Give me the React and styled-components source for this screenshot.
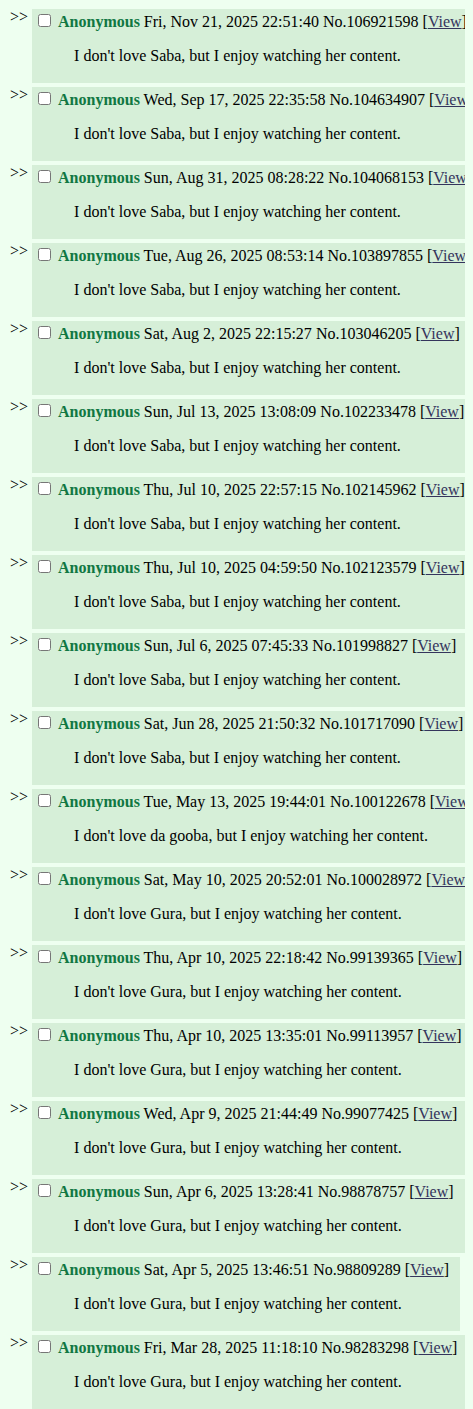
import React from 'react';
import styled, { createGlobalStyle } from 'styled-components';

const GlobalStyle = createGlobalStyle`
  body {
    margin: 8px;
    background-color: #eefff0;
    color: #000;
    font-family: "Liberation Serif", "Times New Roman", serif;
    font-size: 16px;
  }
`;

const Thread = styled.div`
  display: flex;
  flex-direction: column;
`;

const ReplyRow = styled.div`
  display: flex;
  align-items: flex-start;
  margin-bottom: 3px;
`;

const SideArrows = styled.div`
  flex-shrink: 0;
  padding-left: 2px;
  margin-right: 4px;
  color: #000;
`;

const Reply = styled.div`
  flex-shrink: 0;
  width: max-content;
  margin-top: 1px;
  padding: 2px;
  background-color: #d6efd8;
`;

const PostInfo = styled.div`
  white-space: nowrap;
  padding-right: 9px;
`;

const Check = styled.input`
  margin: 3px 3px 3px 4px;
`;

const Name = styled.span`
  color: #117743;
  font-weight: bold;
`;

const ViewLink = styled.a`
  color: #34345c;
  text-decoration: underline;
`;

const Message = styled.blockquote`
  margin: 16px 40px;
`;

const posts = [
  { date: 'Fri, Nov 21, 2025 22:51:40', no: '106921598', who: 'Saba' },
  { date: 'Wed, Sep 17, 2025 22:35:58', no: '104634907', who: 'Saba' },
  { date: 'Sun, Aug 31, 2025 08:28:22', no: '104068153', who: 'Saba' },
  { date: 'Tue, Aug 26, 2025 08:53:14', no: '103897855', who: 'Saba' },
  { date: 'Sat, Aug 2, 2025 22:15:27', no: '103046205', who: 'Saba' },
  { date: 'Sun, Jul 13, 2025 13:08:09', no: '102233478', who: 'Saba' },
  { date: 'Thu, Jul 10, 2025 22:57:15', no: '102145962', who: 'Saba' },
  { date: 'Thu, Jul 10, 2025 04:59:50', no: '102123579', who: 'Saba' },
  { date: 'Sun, Jul 6, 2025 07:45:33', no: '101998827', who: 'Saba' },
  { date: 'Sat, Jun 28, 2025 21:50:32', no: '101717090', who: 'Saba' },
  { date: 'Tue, May 13, 2025 19:44:01', no: '100122678', who: 'da gooba' },
  { date: 'Sat, May 10, 2025 20:52:01', no: '100028972', who: 'Gura' },
  { date: 'Thu, Apr 10, 2025 22:18:42', no: '99139365', who: 'Gura' },
  { date: 'Thu, Apr 10, 2025 13:35:01', no: '99113957', who: 'Gura' },
  { date: 'Wed, Apr 9, 2025 21:44:49', no: '99077425', who: 'Gura' },
  { date: 'Sun, Apr 6, 2025 13:28:41', no: '98878757', who: 'Gura' },
  { date: 'Sat, Apr 5, 2025 13:46:51', no: '98809289', who: 'Gura' },
  { date: 'Fri, Mar 28, 2025 11:18:10', no: '98283298', who: 'Gura' },
];

function Post({ post }) {
  return (
    <ReplyRow>
      <SideArrows>&gt;&gt;</SideArrows>
      <Reply>
        <PostInfo>
          <Check type="checkbox" /> <Name>Anonymous</Name> {post.date} No.{post.no} [<ViewLink href="#">View</ViewLink>]
        </PostInfo>
        <Message>I don't love {post.who}, but I enjoy watching her content.</Message>
      </Reply>
    </ReplyRow>
  );
}

export default function App() {
  return (
    <>
      <GlobalStyle />
      <Thread>
        {posts.map((p) => (
          <Post key={p.no} post={p} />
        ))}
      </Thread>
    </>
  );
}
